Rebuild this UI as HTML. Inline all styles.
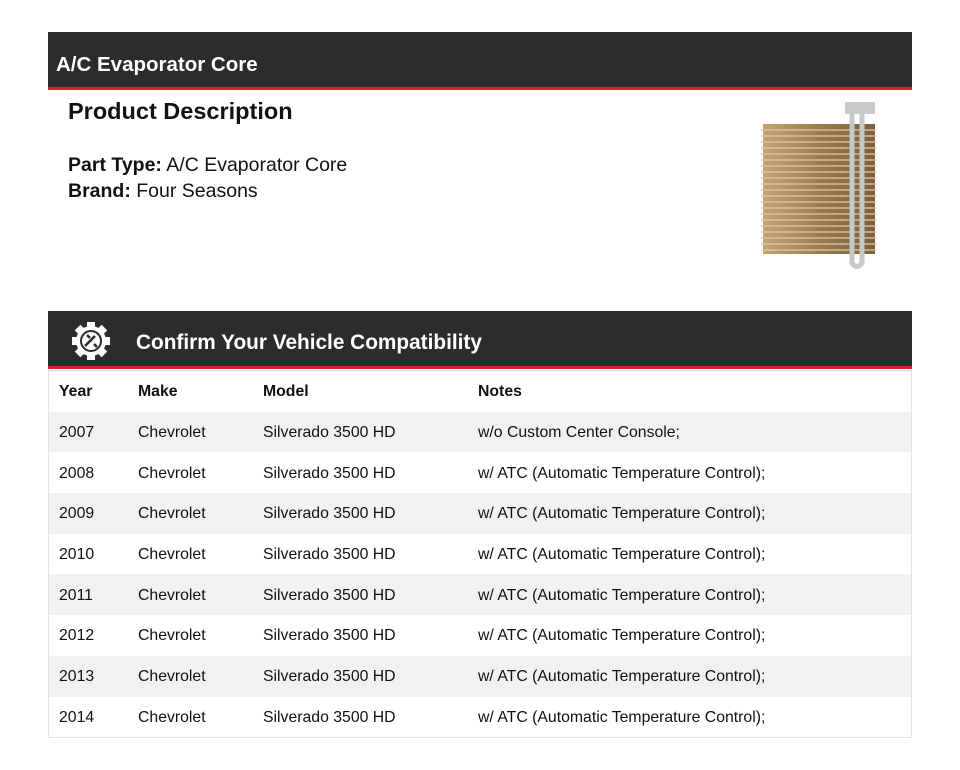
<!DOCTYPE html>
<html><head><style>
body{margin:0;background:#fff;font-family:"Liberation Sans",sans-serif;color:#111;}
.bar{position:absolute;left:48px;width:864px;background:#2d2b2b;border-bottom:3px solid #d8232a;color:#fff;font-weight:bold;}
table{position:absolute;left:48px;top:370px;width:864px;border-collapse:collapse;border:1px solid #e2e2e2;font-size:15.8px;}
td,th{height:38.7px;padding:2px 0 0 10px;text-align:left;}
th{font-weight:bold;}
tr:nth-child(even) td{background:#f1f1f1;}
</style></head><body>
<div class="bar" style="top:32px;height:55px;"><div style="position:absolute;left:8px;top:21px;font-size:20.5px;">A/C Evaporator Core</div></div>
<div style="position:absolute;left:68px;top:98px;font-size:23.5px;font-weight:bold;">Product Description</div>
<div style="position:absolute;left:68px;top:152px;font-size:19.5px;line-height:26px;"><b>Part Type:</b> A/C Evaporator Core<br><b>Brand:</b> Four Seasons</div>
<svg style="position:absolute;left:755px;top:98px" width="130" height="175">
<defs><linearGradient id="g" x1="0" x2="1"><stop offset="0" stop-color="#c4a477"/><stop offset="0.5" stop-color="#9c7c4e"/><stop offset="1" stop-color="#7a6040"/></linearGradient></defs>
<rect x="8" y="26" width="112" height="130" fill="url(#g)"/>
<g stroke="#e2caa0" stroke-width="1.2">
<line x1="6" y1="32" x2="122" y2="32"/><line x1="6" y1="38" x2="122" y2="38"/><line x1="6" y1="44" x2="122" y2="44"/><line x1="6" y1="50" x2="122" y2="50"/><line x1="6" y1="56" x2="122" y2="56"/><line x1="6" y1="62" x2="122" y2="62"/><line x1="6" y1="68" x2="122" y2="68"/><line x1="6" y1="74" x2="122" y2="74"/><line x1="6" y1="80" x2="122" y2="80"/><line x1="6" y1="86" x2="122" y2="86"/><line x1="6" y1="92" x2="122" y2="92"/><line x1="6" y1="98" x2="122" y2="98"/><line x1="6" y1="104" x2="122" y2="104"/><line x1="6" y1="110" x2="122" y2="110"/><line x1="6" y1="116" x2="122" y2="116"/><line x1="6" y1="122" x2="122" y2="122"/><line x1="6" y1="128" x2="122" y2="128"/><line x1="6" y1="134" x2="122" y2="134"/><line x1="6" y1="140" x2="122" y2="140"/><line x1="6" y1="146" x2="122" y2="146"/><line x1="6" y1="152" x2="122" y2="152"/></g>
<rect x="90" y="4" width="30" height="12" fill="#c8cacc"/>
<path d="M97 14 V165 Q102 172 107 165 V14" fill="none" stroke="#c5c8ca" stroke-width="5"/>
</svg>
<div class="bar" style="top:311px;height:55px;">
<svg style="position:absolute;left:22px;top:9px" width="42" height="42" viewBox="0 0 42 42">
<g fill="#fff"><circle cx="21" cy="21" r="15"/>
<rect x="17" y="2" width="8" height="8"/><rect x="17" y="32" width="8" height="8"/><rect x="2" y="17" width="8" height="8"/><rect x="32" y="17" width="8" height="8"/>
<rect x="17" y="2" width="8" height="8" transform="rotate(45 21 21)"/><rect x="17" y="32" width="8" height="8" transform="rotate(45 21 21)"/><rect x="2" y="17" width="8" height="8" transform="rotate(45 21 21)"/><rect x="32" y="17" width="8" height="8" transform="rotate(45 21 21)"/></g>
<circle cx="21" cy="21" r="10" fill="none" stroke="#2d2b2b" stroke-width="2"/>
<path d="M15 26 L25 16 M24 24 l3 3 M17 15 l3 3" stroke="#2d2b2b" stroke-width="2.5"/>
</svg>
<div style="position:absolute;left:88px;top:20px;font-size:20.8px;">Confirm Your Vehicle Compatibility</div></div>
<table>
<tr><th style="width:69px">Year</th><th style="width:115px">Make</th><th style="width:205px">Model</th><th>Notes</th></tr>
<tr><td>2007</td><td>Chevrolet</td><td>Silverado 3500 HD</td><td>w/o Custom Center Console;</td></tr>
<tr><td>2008</td><td>Chevrolet</td><td>Silverado 3500 HD</td><td>w/ ATC (Automatic Temperature Control);</td></tr>
<tr><td>2009</td><td>Chevrolet</td><td>Silverado 3500 HD</td><td>w/ ATC (Automatic Temperature Control);</td></tr>
<tr><td>2010</td><td>Chevrolet</td><td>Silverado 3500 HD</td><td>w/ ATC (Automatic Temperature Control);</td></tr>
<tr><td>2011</td><td>Chevrolet</td><td>Silverado 3500 HD</td><td>w/ ATC (Automatic Temperature Control);</td></tr>
<tr><td>2012</td><td>Chevrolet</td><td>Silverado 3500 HD</td><td>w/ ATC (Automatic Temperature Control);</td></tr>
<tr><td>2013</td><td>Chevrolet</td><td>Silverado 3500 HD</td><td>w/ ATC (Automatic Temperature Control);</td></tr>
<tr><td>2014</td><td>Chevrolet</td><td>Silverado 3500 HD</td><td>w/ ATC (Automatic Temperature Control);</td></tr>
</table>
</body></html>
